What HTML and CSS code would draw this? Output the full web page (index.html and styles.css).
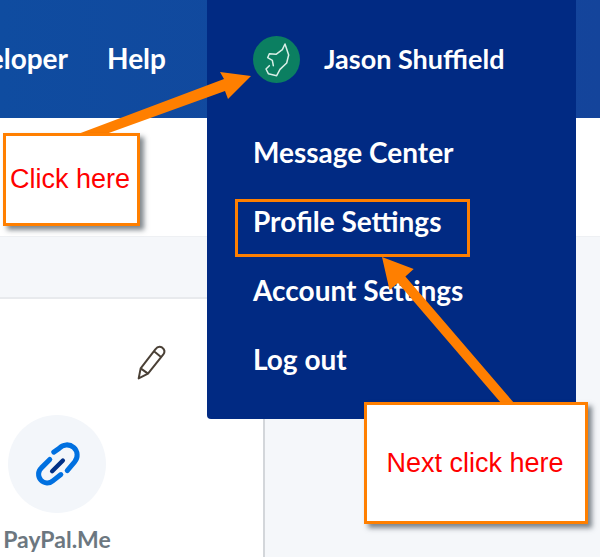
FILE: index.html
```html
<!DOCTYPE html>
<html lang="en">
<head>
<meta charset="utf-8">
<title>Profile Settings</title>
<link rel="stylesheet" href="styles.css">
</head>
<body>
<div class="page">
  <header class="topbar">
    <nav class="nav">
      <span>Developer</span>
      <span>Help</span>
    </nav>
  </header>
  <div class="subbar"></div>
  <div class="spacer"></div>
  <main class="content">
    <section class="card">
      <div class="edit-row">
        <svg class="pencil" viewBox="0 0 150 150" aria-hidden="true">
          <path d="M41 130L47 100L91 43Q100 31 112 38Q123 47 115 58L69 116Z M87 49L109 67 M47 100L69 116"/>
        </svg>
      </div>
      <div class="link-tile">
        <div class="link-circle">
          <svg class="link-icon" viewBox="101 122 140 140" aria-hidden="true">
            <path class="link-blue" d="M148 177L123 202A25 25 0 0 0 158 240L181 222 M160 155L176 144A25 25 0 0 1 222 184L200 210"/>
            <path class="link-dark" d="M155 212L187 180"/>
          </svg>
        </div>
        <div class="link-label">PayPal.Me</div>
      </div>
    </section>
  </main>

  <aside class="menu">
    <div class="menu-head">
      <div class="avatar">
        <svg viewBox="39 31 141 141" aria-hidden="true">
          <path d="M100 120L97 104L83 96L88 84L108 86L127 72L135 55L146 88L140 112L120 131L110 150L85 144L78 130L88 120"/>
        </svg>
      </div>
      <span class="user-name">Jason Shuffield</span>
    </div>
    <ul class="menu-list">
      <li>Message Center</li>
      <li>Profile Settings</li>
      <li>Account Settings</li>
      <li>Log out</li>
    </ul>
  </aside>

  <div class="highlight"></div>

  <svg class="arrows" viewBox="0 0 600 557" aria-hidden="true">
    <polygon points="78,134 224,79 220,72 251,76 228,99 225,91 106,134"/>
    <polygon points="501,403 398,283 389.5,290 382,257 413.7,269 405.4,276.4 514,403"/>
  </svg>

  <div class="callout callout-one">Click here</div>
  <div class="callout callout-two">Next click here</div>
</div>
</body>
</html>
```
FILE: styles.css
```css
* { box-sizing: border-box; }
html, body { margin: 0; padding: 0; }
body { width: 600px; height: 557px; overflow: hidden; background: #f5f7fa; }

.page {
  position: relative;
  width: 600px;
  height: 557px;
  overflow: hidden;
  font-family: Lato, "Open Sans", sans-serif;
}

.topbar {
  height: 118px;
  background: linear-gradient(90deg, #0f4ca0, #14449b);
  overflow: hidden;
}
.nav {
  width: 166px;
  height: 116px;
  display: flex;
  justify-content: flex-end;
  align-items: center;
  gap: 39px;
  color: #fff;
  font-size: 28px;
  font-weight: 700;
  white-space: nowrap;
}

.subbar {
  height: 119px;
  background: #fff;
  border-bottom: 1px solid #eef0f3;
}
.spacer { height: 60px; background: #f5f7fa; }

.content { height: 260px; display: flex; }
.card {
  width: 265px;
  height: 260px;
  background: #fff;
  border-top: 2px solid #e8eaed;
  border-right: 2px solid #d3d6da;
}
.edit-row {
  height: 116px;
  padding: 36px 0 0 125px;
}
.pencil { display: block; width: 50px; height: 50px; }
.pencil path {
  fill: none;
  stroke: #4a4036;
  stroke-width: 6;
  stroke-linejoin: round;
}

.link-tile {
  width: 114px;
  display: flex;
  flex-direction: column;
  align-items: center;
}
.link-circle {
  width: 98px;
  height: 98px;
  border-radius: 50%;
  background: #f3f6fa;
  display: flex;
  align-items: center;
  justify-content: center;
}
.link-icon { width: 47px; height: 47px; }
.link-icon path { fill: none; stroke-linecap: round; stroke-linejoin: round; }
.link-blue { stroke: #0070e0; stroke-width: 15; }
.link-dark { stroke: #003087; stroke-width: 13; }
.link-label {
  margin-top: 13px;
  color: #6c7780;
  font-size: 23px;
  font-weight: 700;
  line-height: 26px;
  white-space: nowrap;
}

.menu {
  position: absolute;
  left: 207px;
  top: 0;
  width: 369px;
  height: 419px;
  padding-left: 46px;
  background: #012a83;
  border-radius: 0 0 4px 4px;
  color: #fff;
}
.menu-head {
  height: 118px;
  display: flex;
  align-items: center;
  gap: 24px;
}
.avatar {
  width: 47px;
  height: 47px;
  border-radius: 50%;
  background: #0b7f61;
}
.avatar svg { display: block; width: 47px; height: 47px; }
.avatar path {
  fill: none;
  stroke: #d9efe7;
  stroke-width: 4.5;
  stroke-linejoin: round;
  stroke-linecap: round;
}
.user-name { font-size: 27px; font-weight: 700; white-space: nowrap; margin-bottom: 2px; }
.menu-list {
  list-style: none;
  margin: 0;
  padding: 0;
  font-size: 28px;
  font-weight: 700;
}
.menu-list li {
  height: 69px;
  line-height: 69px;
  white-space: nowrap;
}

.highlight {
  position: absolute;
  left: 235px;
  top: 199px;
  width: 235px;
  height: 58px;
  border: 3px solid #ff7f00;
}

.arrows {
  position: absolute;
  left: 0;
  top: 0;
  width: 600px;
  height: 557px;
  fill: #ff7f00;
}

.callout {
  position: absolute;
  display: flex;
  align-items: center;
  justify-content: center;
  background: #fff;
  border: 3px solid #ff7f00;
  box-shadow: 4px 4px 5px rgba(60, 70, 80, 0.65);
  color: #f00;
  font-family: "Liberation Sans", Arial, sans-serif;
  font-size: 27px;
  white-space: nowrap;
}
.callout-one { left: 3px; top: 133px; width: 137px; height: 93px; padding-right: 3px; }
.callout-two { left: 364px; top: 402px; width: 224px; height: 122px; padding-right: 2px; }
```
